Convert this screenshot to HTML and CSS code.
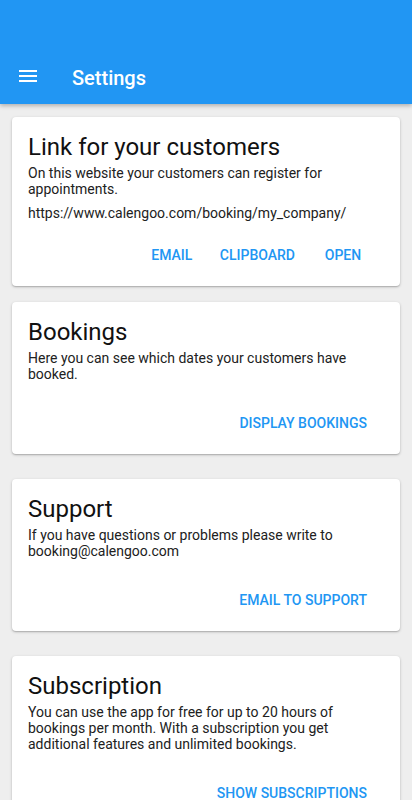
FILE: index.html
```html
<!DOCTYPE html>
<html>
<head>
    <title>Settings</title>
    <link rel="stylesheet" href="styles.css">
</head>
<body>
    <header class="app-bar">
        <div class="toolbar">
            <button class="menu-button" aria-label="Menu">
                <svg width="24" height="24" viewBox="0 0 24 24"><path fill="#fff" d="M3 18h18v-2H3v2zm0-5h18v-2H3v2zm0-7v2h18V6H3z"/></svg>
            </button>
            <h1 class="toolbar-title">Settings</h1>
        </div>
    </header>

    <main class="content">
        <section class="card card-first">
            <h2 class="card-title">Link for your customers</h2>
            <p class="card-text">On this website your customers can register for appointments.</p>
            <p class="card-url">https://www.calengoo.com/booking/my_company/</p>
            <div class="card-actions">
                <button class="text-button">Email</button>
                <button class="text-button">Clipboard</button>
                <button class="text-button">Open</button>
            </div>
        </section>

        <section class="card">
            <h2 class="card-title">Bookings</h2>
            <p class="card-text">Here you can see which dates your customers have booked.</p>
            <div class="card-actions">
                <button class="text-button">Display bookings</button>
            </div>
        </section>

        <section class="card">
            <h2 class="card-title">Support</h2>
            <p class="card-text">If you have questions or problems please write to booking@calengoo.com</p>
            <div class="card-actions">
                <button class="text-button">Email to support</button>
            </div>
        </section>

        <section class="card">
            <h2 class="card-title">Subscription</h2>
            <p class="card-text">You can use the app for free for up to 20 hours of bookings per month. With a subscription you get additional features and unlimited bookings.</p>
            <div class="card-actions">
                <button class="text-button">Show subscriptions</button>
            </div>
        </section>
    </main>
</body>
</html>
```

FILE: styles.css
```css
html,
body {
	height: 100%;
}

body {
	margin: 0;
	background: #eeeeee;
	font-family: Roboto, "Noto Sans", sans-serif;
	color: #212121;
	overflow: hidden;
}

.app-bar {
	position: relative;
	z-index: 1;
	background-color: #2196f3;
	padding-top: 48px;
	box-shadow: 0 2px 4px rgba(0,0,0,0.25);
}

.toolbar {
	height: 56px;
	display: flex;
	align-items: center;
}

.menu-button {
	width: 24px;
	height: 24px;
	margin-left: 16px;
	padding: 0;
	border: none;
	background: none;
	display: flex;
}

.toolbar-title {
	margin: 0 0 0 32px;
	font-size: 20px;
	font-weight: 500;
	color: #fff;
	padding-top: 4px;
}

.content {
	padding: 13px 12px;
}

.card {
	background: #fff;
	border-radius: 4px;
	box-shadow: 0 1px 3px rgba(0,0,0,0.22), 0 1px 1px rgba(0,0,0,0.12);
	padding: 16px 16px 15px;
	margin-bottom: 25px;
}

.card-first {
	margin-bottom: 16px;
}

.card-title {
	margin: 0 0 4px;
	font-size: 24px;
	line-height: 28px;
	font-weight: 400;
	color: #111;
}

.card-text,
.card-url {
	margin: 0;
	font-size: 14px;
	line-height: 16px;
}

.card-url {
	margin-top: 8px;
}

.card-actions {
	display: flex;
	justify-content: flex-end;
	margin-top: 21px;
	padding-right: 9px;
}

.card-url + .card-actions {
	margin-top: 14px;
}

.text-button {
	height: 36px;
	min-width: 64px;
	margin-left: 8px;
	padding: 4px 8px 0;
	border: none;
	background: none;
	font-family: Roboto, sans-serif;
	font-size: 14px;
	font-weight: 500;
	text-transform: uppercase;
	color: #2196f3;
	cursor: pointer;
}
```
